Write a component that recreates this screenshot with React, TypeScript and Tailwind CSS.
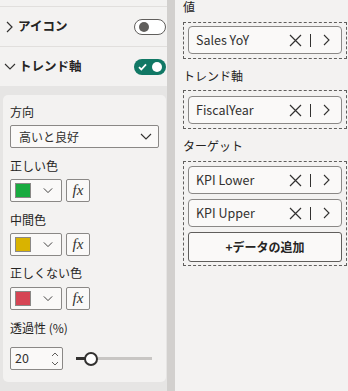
import React from 'react';

const font = { fontFamily: "'Noto Sans CJK JP', 'Noto Sans', sans-serif" };

const ChevronDown: React.FC<{ className?: string }> = ({ className }) => (
    <svg width="12" height="7" viewBox="0 0 12 7" className={className}>
        <path d="M1 1l5 5 5-5" fill="none" stroke="#323130" strokeWidth="1.1" />
    </svg>
);

const Toggle: React.FC<{ on: boolean }> = ({ on }) =>
    on ? (
        <div className="w-[32px] h-[16px] rounded-full bg-[#117865] flex items-center justify-between px-[4px]">
            <svg width="9" height="8" viewBox="0 0 9 8">
                <path d="M1 4.2l2.3 2.3L8 1.3" fill="none" stroke="#fff" strokeWidth="1.8" />
            </svg>
            <div className="w-[10px] h-[10px] rounded-full bg-white" />
        </div>
    ) : (
        <div className="w-[32px] h-[16px] rounded-full border border-[#605e5c] bg-white flex items-center px-[4px]">
            <div className="w-[10px] h-[10px] rounded-full bg-[#605e5c]" />
        </div>
    );

const ColorRow: React.FC<{ color: string }> = ({ color }) => (
    <div className="flex gap-[4px] h-[23px]">
        <div className="w-[52px] border border-[#8a8886] rounded-[2px] flex items-center pl-[4px] bg-[#faf9f8]">
            <div className="w-[16px] h-[15px] border border-[#8a8886]" style={{ background: color }} />
            <ChevronDown className="ml-[12px] w-[10px]" />
        </div>
        <div className="w-[24px] border border-[#8a8886] rounded-[2px] flex items-center justify-center bg-[#faf9f8]">
            <span className="italic text-[15px] leading-none text-[#323130]" style={{ fontFamily: "'Liberation Serif', serif" }}>fx</span>
        </div>
    </div>
);

const Field: React.FC<{ name: string }> = ({ name }) => (
    <div className="h-[28px] border border-[#8a8886] rounded-[4px] bg-[#faf9f8] flex items-center pl-[7px] pr-[11px]">
        <span className="flex-1 text-[12.5px] text-[#323130]">{name}</span>
        <svg width="13" height="13" viewBox="0 0 13 13">
            <path d="M1 1l11 11M12 1L1 12" stroke="#323130" strokeWidth="1.2" />
        </svg>
        <div className="w-px h-[13px] bg-[#323130] ml-[8px] mr-[12px]" />
        <svg width="7" height="12" viewBox="0 0 7 12">
            <path d="M1 1l5 5-5 5" fill="none" stroke="#323130" strokeWidth="1.1" />
        </svg>
    </div>
);

const App: React.FC = () => {
    return (
        <div className="w-[348px] h-[391px] flex bg-[#f3f2f1] text-[#252423] overflow-hidden" style={font}>
            {/* left format pane */}
            <div className="w-[167px] flex flex-col">
                <div className="h-[6px] border-b border-[#e1dfdd] box-content" />
                <div className="h-[40px] border-b border-[#e1dfdd] flex items-center pl-[6px] pr-[1px]">
                    <svg width="7" height="12" viewBox="0 0 7 12">
                        <path d="M1 1l5 5-5 5" fill="none" stroke="#323130" strokeWidth="1.2" />
                    </svg>
                    <span className="ml-[5px] flex-1 text-[12.5px] font-semibold">アイコン</span>
                    <Toggle on={false} />
                </div>
                <div className="h-[39px] flex items-center pl-[4px] pr-[1px]">
                    <ChevronDown />
                    <span className="ml-[3px] flex-1 text-[12.5px] font-semibold">トレンド軸</span>
                    <Toggle on />
                </div>
                <div className="flex-1 bg-[#e6e5e4] pt-[9px] pl-[3px] pr-px">
                    <div className="bg-[#f3f2f1] rounded-[5px] px-[7px] pt-[7px] pb-[12px] text-[12px]">
                        <div className="h-[20px] leading-[20px]">方向</div>
                        <div className="mt-[3px] h-[23px] border border-[#8a8886] rounded-[2px] flex items-center pl-[8px] pr-[6px] bg-[#faf9f8]">
                            <span className="flex-1 text-[#323130]">高いと良好</span>
                            <ChevronDown />
                        </div>
                        <div className="mt-[8px] h-[20px] leading-[20px]">正しい色</div>
                        <div className="mt-[3px]"><ColorRow color="#1aab40" /></div>
                        <div className="mt-[8px] h-[20px] leading-[20px]">中間色</div>
                        <div className="mt-[3px]"><ColorRow color="#d9b300" /></div>
                        <div className="mt-[7px] h-[20px] leading-[20px]">正しくない色</div>
                        <div className="mt-[4px]"><ColorRow color="#d64554" /></div>
                        <div className="mt-[8px] h-[20px] leading-[20px]">透過性 (%)</div>
                        <div className="mt-[9px] flex items-center">
                            <div className="w-[53px] h-[23px] border border-[#8a8886] rounded-[2px] flex items-center pl-[4px] pr-[3px] bg-[#faf9f8]">
                                <span className="flex-1 text-[12.5px] text-[#323130]">20</span>
                                <svg width="8" height="16" viewBox="0 0 8 16">
                                    <path d="M1 5l3-3 3 3M1 11l3 3 3-3" fill="none" stroke="#605e5c" strokeWidth="1" />
                                </svg>
                            </div>
                            <div className="ml-[13px] w-[76px] h-[14px] flex items-center">
                                <div className="w-[9px] h-[3px] bg-[#323130]" />
                                <div className="w-[14px] h-[14px] rounded-full border-2 border-[#323130] bg-white -mx-[1px] z-10" />
                                <div className="flex-1 h-[3px] bg-[#c8c6c4]" />
                            </div>
                        </div>
                    </div>
                </div>
            </div>
            <div className="w-[8px] bg-[#d2d0ce] shrink-0" />
            {/* right field wells */}
            <div className="flex-1 pl-[8px] pr-px text-[12px]">
                <div className="-mt-[3px] h-[20px] leading-[20px]">値</div>
                <div className="mt-[5px] border border-dashed border-[#605e5c] pt-[3px] pb-[4px] px-[4px]">
                    <Field name="Sales YoY" />
                </div>
                <div className="mt-[7px] h-[20px] leading-[20px]">トレンド軸</div>
                <div className="mt-[4px] border border-dashed border-[#605e5c] pt-[5px] pb-[4px] px-[4px]">
                    <Field name="FiscalYear" />
                </div>
                <div className="mt-[7px] h-[20px] leading-[20px]">ターゲット</div>
                <div className="mt-[5px] border border-dashed border-[#605e5c] pt-[4px] pb-[3px] px-[4px] flex flex-col gap-[5px]">
                    <Field name="KPI Lower" />
                    <Field name="KPI Upper" />
                    <div className="h-[30px] border border-[#605e5c] rounded-[3px] bg-[#faf9f8] flex items-center justify-center font-semibold text-[#252423]">
                        +データの追加
                    </div>
                </div>
            </div>
        </div>
    );
};

export default App;
